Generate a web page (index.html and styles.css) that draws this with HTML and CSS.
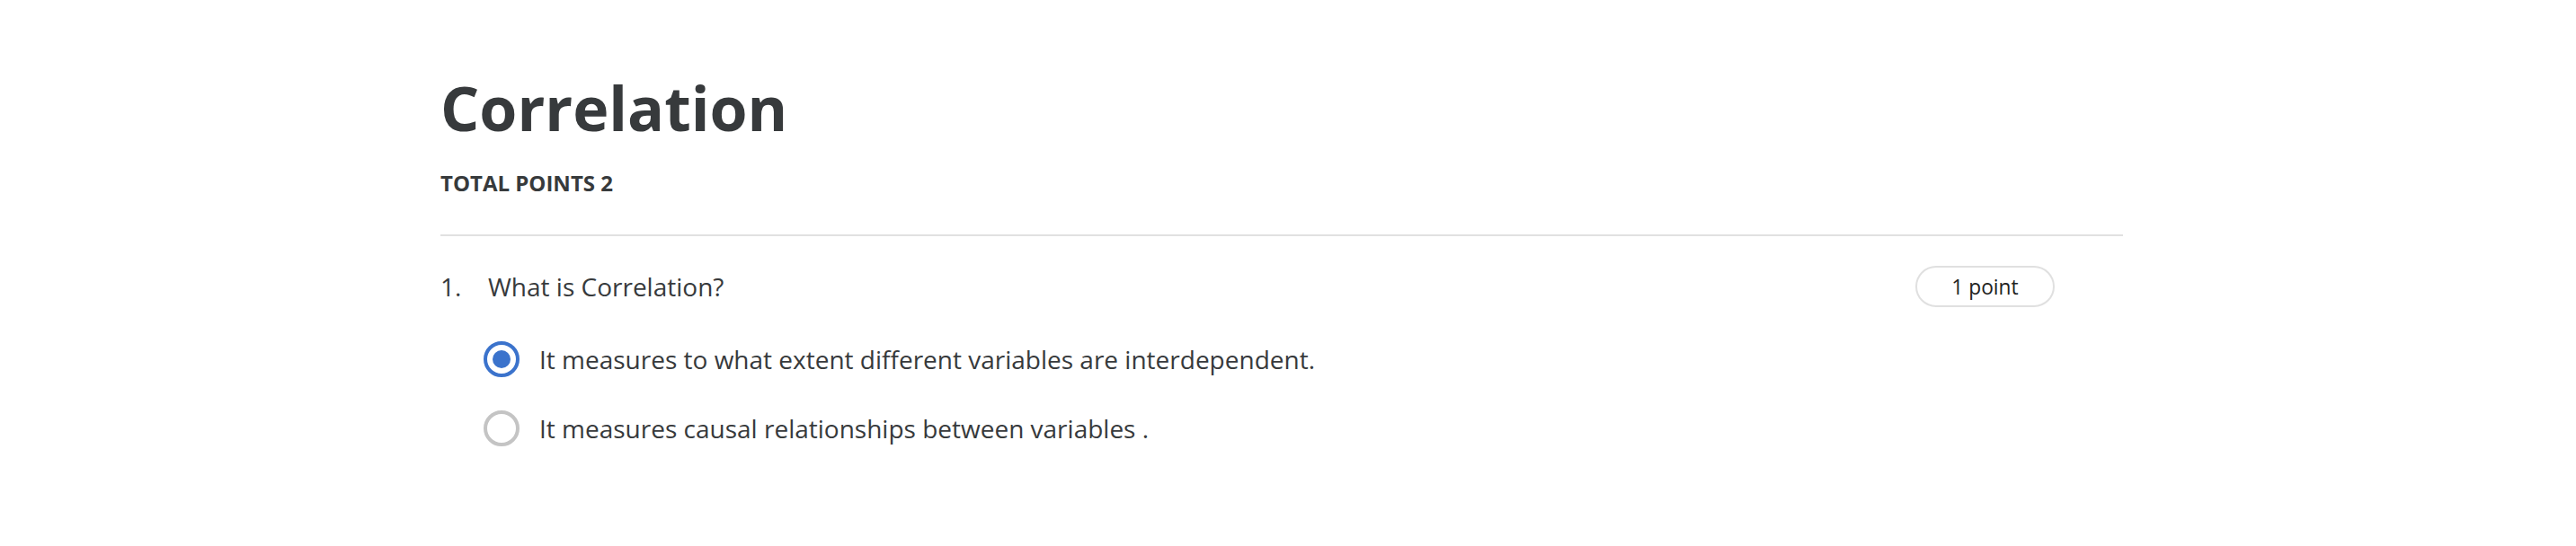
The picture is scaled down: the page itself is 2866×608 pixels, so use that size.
FILE: index.html
```html
<!DOCTYPE html>
<html lang="en">
<head>
<meta charset="utf-8">
<title>Correlation</title>
<link rel="stylesheet" href="styles.css">
</head>
<body>
<main class="page">
  <header class="quiz-header">
    <h1 class="quiz-title">Correlation</h1>
    <div class="quiz-total">TOTAL POINTS 2</div>
  </header>
  <section class="question">
    <div class="question-row">
      <span class="question-num">1.</span>
      <span class="question-text">What is Correlation?</span>
      <span class="points-pill">1 point</span>
    </div>
    <div class="options">
      <label class="option">
        <span class="radio radio-checked"><span class="radio-dot"></span></span>
        <span class="option-text">It measures to what extent different variables are interdependent.</span>
      </label>
      <label class="option">
        <span class="radio"></span>
        <span class="option-text">It measures causal relationships between variables .</span>
      </label>
    </div>
  </section>
</main>
</body>
</html>
```
FILE: styles.css
```css
html, body {
  margin: 0;
  padding: 0;
  background: #ffffff;
}
body {
  font-family: "Open Sans", "Noto Sans", sans-serif;
  color: #373a3c;
}
.page {
  width: 1872px;
  padding: 78px 0 0 490px;
}
.quiz-header {
  padding-bottom: 42px;
  border-bottom: 2px solid #e1e1e1;
}
.quiz-title {
  margin: 0;
  font-size: 68px;
  line-height: 84px;
  font-weight: 700;
  color: #373a3c;
}
.quiz-total {
  margin-top: 27px;
  font-size: 24px;
  line-height: 30px;
  font-weight: 700;
  color: #373a3c;
}
.question {
  padding-top: 33px;
}
.question-row {
  display: flex;
  align-items: center;
  height: 46px;
  padding-right: 76px;
}
.question-num {
  width: 53px;
  font-size: 28px;
  line-height: 42px;
}
.question-text {
  flex: 1;
  font-size: 28px;
  line-height: 42px;
}
.points-pill {
  box-sizing: border-box;
  width: 155px;
  height: 46px;
  border: 2px solid #e0e0e0;
  border-radius: 23px;
  display: flex;
  align-items: center;
  justify-content: center;
  font-size: 22.75px;
  color: #222;
}
.options {
  display: flex;
  flex-direction: column;
  gap: 37px;
  padding: 38px 0 0 48px;
}
.option {
  display: flex;
  align-items: center;
  gap: 22px;
  height: 40px;
}
.radio {
  box-sizing: border-box;
  width: 40px;
  height: 40px;
  border-radius: 50%;
  border: 4px solid #c4c4c4;
  display: flex;
  align-items: center;
  justify-content: center;
  flex: none;
}
.radio-checked {
  border-color: #3b73cc;
}
.radio-dot {
  width: 20px;
  height: 20px;
  border-radius: 50%;
  background: #3b73cc;
}
.option-text {
  font-size: 28px;
  line-height: 42px;
  color: #373a3c;
}
```
